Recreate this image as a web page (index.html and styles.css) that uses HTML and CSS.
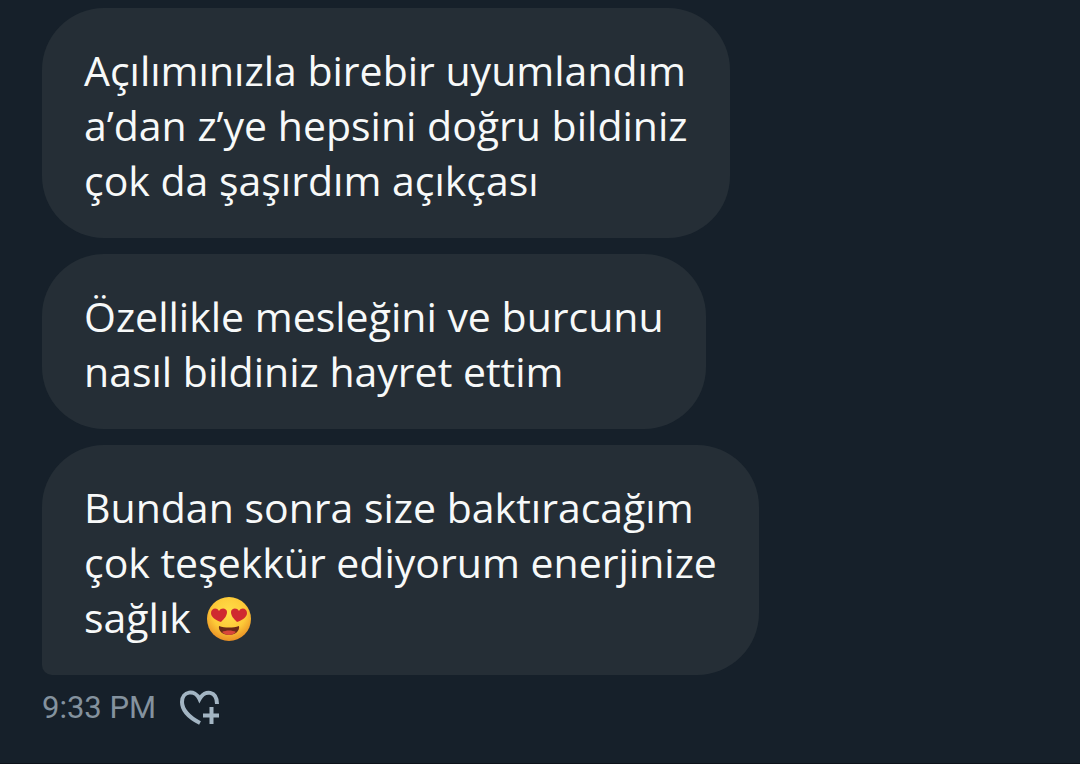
FILE: index.html
```html
<!DOCTYPE html>
<html lang="tr">
<head>
    <meta charset="UTF-8">
    <meta name="viewport" content="width=device-width, initial-scale=1.0">
    <title>Messages</title>
    <link rel="stylesheet" href="styles.css">
</head>
<body>
    <main class="chat">
        <p class="bubble">Açılımınızla birebir uyumlandım<br>a’dan z’ye hepsini doğru bildiniz<br>çok da şaşırdım açıkçası</p>
        <p class="bubble">Özellikle mesleğini ve burcunu<br>nasıl bildiniz hayret ettim</p>
        <p class="bubble last">Bundan sonra size baktıracağım<br>çok teşekkür ediyorum enerjinize<br>sağlık
            <svg class="emoji" viewBox="0 0 44 44" role="img" aria-label="heart eyes">
                <defs>
                    <radialGradient id="face" cx="50%" cy="36%" r="64%">
                        <stop offset="0" stop-color="#ffe04a"/>
                        <stop offset="0.6" stop-color="#fdca38"/>
                        <stop offset="1" stop-color="#e98f25"/>
                    </radialGradient>
                </defs>
                <circle cx="22" cy="22" r="22" fill="url(#face)"/>
                <g fill="#cf2a30">
                    <path d="M14 25C8 23 4 20 4 16c0-5 6-6 8-2 2-4 8-3 8 1 0 4-3 7-6 10z"/>
                    <path d="M30 25c6-2 10-5 10-9 0-5-6-6-8-2-2-4-8-3-8 1 0 4 3 7 6 10z"/>
                </g>
                <path d="M12 29c6 2 14 2 20 0 1 5-4 9-10 9s-11-4-10-9z" fill="#6b2b18"/>
                <path d="M15 35c4-2 10-2 14 0-2 2-4 3-7 3s-5-1-7-3z" fill="#d9463a"/>
            </svg>
        </p>
        <div class="meta">
            <time datetime="21:33">9:33 PM</time>
            <button class="react" type="button" aria-label="Add reaction">
                <svg viewBox="0 0 40 36" fill="none" stroke="#a3b5c3" stroke-width="4">
                    <path d="M20 33C8 27 2 19 2 12 2 1 15-1 19.500 9 25-1 37 1 37 14"/>
                    <path d="M31.500 17v17M23 25.500h16"/>
                </svg>
            </button>
        </div>
    </main>
</body>
</html>
```

FILE: styles.css
```css
body {
    margin: 0;
    min-height: 100vh;
    box-sizing: border-box;
    background: #16202a;
    border-bottom: 1px solid #0d121a;
    font-family: "Open Sans", "Noto Sans", sans-serif;
}

.chat {
    display: flex;
    flex-direction: column;
    align-items: flex-start;
    gap: 16px;
    padding: 8px 42px;
}

.bubble {
    margin: 0;
    padding: 35px 42px 30px;
    border-radius: 62px;
    background: #252e36;
    color: #f7f9f9;
    font-size: 41px;
    font-weight: 450;
    line-height: 55px;
}

.bubble.last {
    border-bottom-left-radius: 10px;
}

.emoji {
    width: 44px;
    height: 44px;
    margin-left: 6px;
    vertical-align: -8px;
}

/* time and reaction button under the last message */
.meta {
    display: flex;
    align-items: center;
    gap: 24px;
    margin-top: -3px;
    color: #84929e;
    font-family: Roboto, "Liberation Sans", sans-serif;
    font-size: 31px;
    line-height: 40px;
}

.react {
    display: flex;
    padding: 0;
    border: none;
    background: none;
    cursor: pointer;
}

.react svg {
    width: 40px;
    height: 36px;
}
```
